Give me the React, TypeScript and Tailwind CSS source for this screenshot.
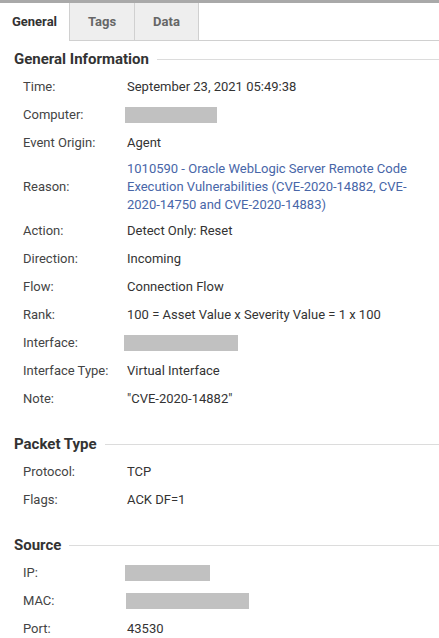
import React from "react";

type Row = { label: string; value?: React.ReactNode; redact?: { w: number; ml?: number } };

const general: Row[] = [
  { label: "Time:", value: "September 23, 2021 05:49:38" },
  { label: "Computer:", redact: { w: 92, ml: -2 } },
  { label: "Event Origin:", value: "Agent" },
  {
    label: "Reason:",
    value: (
      <span className="block leading-[18px] text-[#4866a8]">
        1010590 - Oracle WebLogic Server Remote Code Execution Vulnerabilities (CVE-2020-14882, CVE-2020-14750 and CVE-2020-14883)
      </span>
    ),
  },
  { label: "Action:", value: "Detect Only: Reset" },
  { label: "Direction:", value: "Incoming" },
  { label: "Flow:", value: "Connection Flow" },
  { label: "Rank:", value: "100 = Asset Value x Severity Value = 1 x 100" },
  { label: "Interface:", redact: { w: 114, ml: -3 } },
  { label: "Interface Type:", value: "Virtual Interface" },
  { label: "Note:", value: "\"CVE-2020-14882\"" },
];

const packet: Row[] = [
  { label: "Protocol:", value: "TCP" },
  { label: "Flags:", value: "ACK DF=1" },
];

const source: Row[] = [
  { label: "IP:", redact: { w: 85, ml: -2 } },
  { label: "MAC:", redact: { w: 123, ml: -1 } },
  { label: "Port:", value: "43530" },
];

function Heading({ title, first }: { title: string; first?: boolean }) {
  return (
    <div className={`flex items-center gap-2 pl-[14px] pb-[4px] ${first ? "pt-[8px]" : "pt-[21px]"}`}>
      <span className="text-[15px] leading-[20px] font-bold text-[#333]">{title}</span>
      <div className="flex-1 h-px bg-[#dcdcdc]" />
    </div>
  );
}

function Rows({ rows }: { rows: Row[] }) {
  return (
    <div>
      {rows.map((r) => (
        <div key={r.label} className="flex items-center py-[3px] pl-[23px] pr-3 text-[13px] leading-[22px]">
          <div className="w-[104px] shrink-0 text-[#444]">{r.label}</div>
          <div className="flex-1 min-w-0 text-[#333]">
            {r.redact ? (
              <div className="h-[16px] bg-[#c1c1c1]" style={{ width: r.redact.w, marginLeft: r.redact.ml }} />
            ) : (
              r.value
            )}
          </div>
        </div>
      ))}
    </div>
  );
}

export default function App() {
  return (
    <div className="w-[439px] h-[638px] overflow-hidden bg-white font-['Roboto',sans-serif]">
      <div className="h-[3px] bg-[#a9a9a9]" />
      <div className="flex h-[38px]">
        <div className="w-[69px] flex items-center justify-center text-[13px] font-bold text-[#333]">General</div>
        <div className="w-[65px] flex items-center justify-center text-[13px] font-bold text-[#666] bg-[#eeeeee] border-l border-b border-[#d0d0d0]">Tags</div>
        <div className="w-[65px] flex items-center justify-center text-[13px] font-bold text-[#666] bg-[#eeeeee] border-l border-r border-b border-[#d0d0d0]">Data</div>
        <div className="flex-1 border-b border-[#d0d0d0]" />
      </div>
      <Heading title="General Information" first />
      <Rows rows={general} />
      <Heading title="Packet Type" />
      <Rows rows={packet} />
      <Heading title="Source" />
      <Rows rows={source} />
    </div>
  );
}
